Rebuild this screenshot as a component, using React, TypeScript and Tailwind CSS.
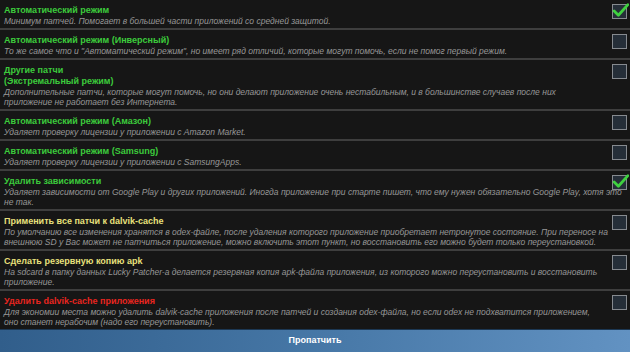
import React from 'react';

type Tone = 'green' | 'yellow' | 'red';

interface PatchOption {
  title: string[];
  desc: string[];
  tone: Tone;
  checked?: boolean;
}

const options: PatchOption[] = [
  {
    title: ['Автоматический режим'],
    desc: ['Минимум патчей. Помогает в большей части приложений со средней защитой.'],
    tone: 'green',
    checked: true,
  },
  {
    title: ['Автоматический режим (Инверсный)'],
    desc: ['То же самое что и "Автоматический режим", но имеет ряд отличий, которые могут помочь, если не помог первый режим.'],
    tone: 'green',
  },
  {
    title: ['Другие патчи', '(Экстремальный режим)'],
    desc: [
      'Дополнительные патчи, которые могут помочь, но они делают приложение очень нестабильным, и в большинстве случаев после них',
      'приложение не работает без Интернета.',
    ],
    tone: 'green',
  },
  {
    title: ['Автоматический режим (Амазон)'],
    desc: ['Удаляет проверку лицензии у приложении с Amazon Market.'],
    tone: 'green',
  },
  {
    title: ['Автоматический режим (Samsung)'],
    desc: ['Удаляет проверку лицензии у приложении с SamsungApps.'],
    tone: 'green',
  },
  {
    title: ['Удалить зависимости'],
    desc: [
      'Удаляет зависимости от Google Play и других приложений. Иногда приложение при старте пишет, что ему нужен обязательно Google Play, хотя это',
      'не так.',
    ],
    tone: 'green',
    checked: true,
  },
  {
    title: ['Применить все патчи к dalvik-cache'],
    desc: [
      'По умолчанию все изменения хранятся в odex-файле, после удаления которого приложение приобретает нетронутое состояние. При переносе на',
      'внешнюю SD у Вас может не патчиться приложение, можно включить этот пункт, но восстановить его можно будет только переустановкой.',
    ],
    tone: 'yellow',
  },
  {
    title: ['Сделать резервную копию apk'],
    desc: [
      'На sdcard в папку данных Lucky Patcher-а делается резервная копия apk-файла приложения, из которого можно переустановить и восстановить',
      'приложение.',
    ],
    tone: 'yellow',
  },
  {
    title: ['Удалить dalvik-cache приложения'],
    desc: [
      'Для экономии места можно удалить dalvik-cache приложения после патчей и создания odex-файла, но если odex не подхватится приложением,',
      'оно станет нерабочим (надо его переустановить).',
    ],
    tone: 'red',
  },
];

const toneClass: Record<Tone, string> = {
  green: 'text-[#3ccb3c]',
  yellow: 'text-[#e8e07c]',
  red: 'text-[#e8251f]',
};

const CheckBox: React.FC<{ checked?: boolean }> = ({ checked }) => (
  <div className="absolute right-[3px] top-[4px] h-[15px] w-[15px] border-[1.5px] border-[#868a8f] bg-[#252e38]">
    {checked && (
      <svg viewBox="0 0 16 16" className="absolute -left-[1px] -top-[3px] h-[17px] w-[17px]">
        <path d="M2 8.5 L6 12.5 L15 2.5" fill="none" stroke="#3fd03f" strokeWidth="2.6" strokeLinecap="round" strokeLinejoin="round" />
      </svg>
    )}
  </div>
);

export default function App() {
  return (
    <div
      className="flex h-[352px] w-[630px] flex-col overflow-hidden bg-[#161616]"
      style={{ fontFamily: '"Liberation Sans", Arial, sans-serif' }}
    >
      {options.map((opt, i) => (
        <div key={i} className="relative flex flex-col">
          <div className="px-[4px] pb-[2px] pt-[5px]">
            {opt.title.map((t) => (
              <div key={t} className={`whitespace-nowrap text-[9px] font-bold leading-[11px] ${toneClass[opt.tone]}`}>
                {t}
              </div>
            ))}
            {opt.desc.map((d) => (
              <div key={d} className="whitespace-nowrap text-[8.5px] italic leading-[10px] text-[#979797]">
                {d}
              </div>
            ))}
          </div>
          {i < options.length - 1 && <div className="h-[2px] bg-[#3e3e3e]" />}
          <CheckBox checked={opt.checked} />
        </div>
      ))}
      <div className="mt-auto flex h-[23px] items-center justify-center border-t border-[#1c3854] bg-gradient-to-r from-[#315e8b] via-[#4677a6] to-[#6292c2]">
        <span className="text-[9px] font-bold text-white">Пропатчить</span>
      </div>
    </div>
  );
}
